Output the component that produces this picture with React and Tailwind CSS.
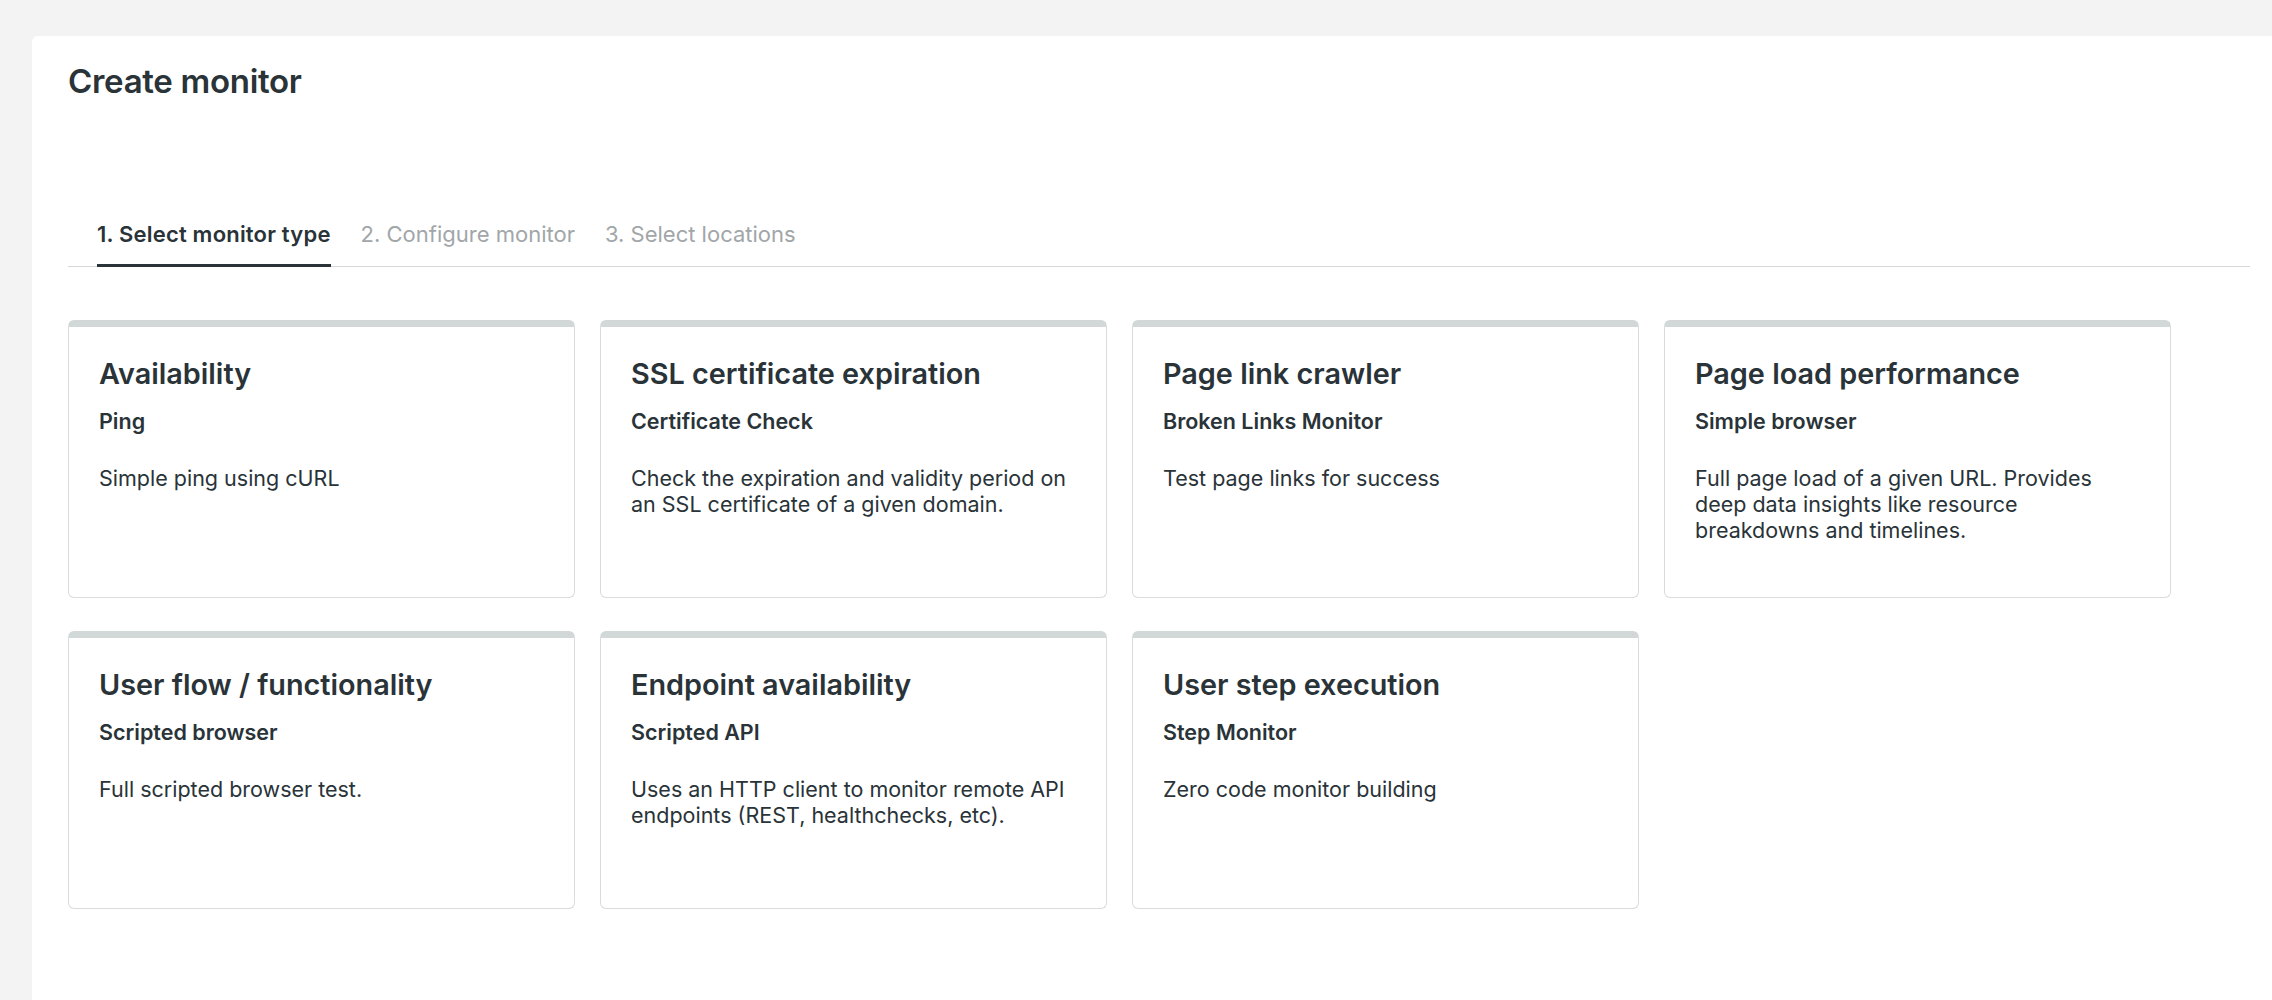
import React from "react";

const cards = [
  { title: "Availability", sub: "Ping", desc: "Simple ping using cURL" },
  { title: "SSL certificate expiration", sub: "Certificate Check", desc: "Check the expiration and validity period on an SSL certificate of a given domain." },
  { title: "Page link crawler", sub: "Broken Links Monitor", desc: "Test page links for success" },
  { title: "Page load performance", sub: "Simple browser", desc: "Full page load of a given URL. Provides deep data insights like resource breakdowns and timelines." },
  { title: "User flow / functionality", sub: "Scripted browser", desc: "Full scripted browser test." },
  { title: "Endpoint availability", sub: "Scripted API", desc: "Uses an HTTP client to monitor remote API endpoints (REST, healthchecks, etc)." },
  { title: "User step execution", sub: "Step Monitor", desc: "Zero code monitor building" },
];

function Card({ title, sub, desc }) {
  return (
    <div className="h-[278px] rounded-[6px] border border-[#d9dcdd] border-t-[7px] border-t-[#d2d7d8] bg-white pl-[30px] pr-[36px] pt-[29px] cursor-pointer">
      <h3 className="text-[28.8px] leading-[36px] font-semibold text-[#293338]">{title}</h3>
      <div className="mt-[16px] text-[21.5px] leading-[26px] font-semibold text-[#293338]">{sub}</div>
      <p className="mt-[31px] text-[21.5px] leading-[26px] font-normal text-[#293338]">{desc}</p>
    </div>
  );
}

export default function App() {
  return (
    <div className="min-h-screen bg-[#f3f3f3] pt-[36px] pl-[32px]" style={{ fontFamily: "Inter, 'Noto Sans', sans-serif" }}>
      <div className="min-h-[964px] rounded-tl-[6px] bg-white pl-[36px] pr-[22px] pt-[25px]">
        <h1 className="text-[33px] leading-[40px] font-semibold text-[#293338] tracking-[-0.3px]">Create monitor</h1>
        <div className="mt-[118px] flex gap-[30px] border-b border-[#d5d8d9] pl-[29px]">
          <div className="-mb-px border-b-[3px] border-[#293338] pb-[15px] text-[22px] leading-[30px] font-semibold text-[#293338] tracking-[0.2px]">1. Select monitor type</div>
          <div className="-mb-px border-b-[3px] border-transparent pb-[15px] text-[22px] leading-[30px] text-[#a1a6a9]">2. Configure monitor</div>
          <div className="-mb-px border-b-[3px] border-transparent pb-[15px] text-[22px] leading-[30px] text-[#a1a6a9]">3. Select locations</div>
        </div>
        <div className="mt-[53px] grid grid-cols-[repeat(4,507px)] gap-x-[25px] gap-y-[33px]">
          {cards.map((c) => (
            <Card key={c.title} {...c} />
          ))}
        </div>
      </div>
    </div>
  );
}
